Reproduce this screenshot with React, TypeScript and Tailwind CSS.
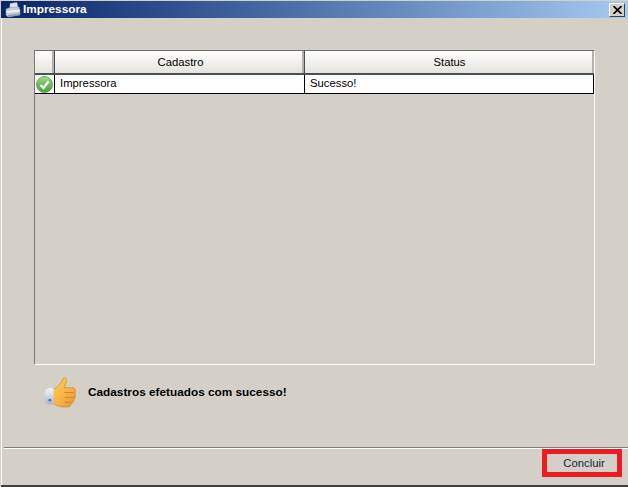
const tahoma = "font-['Liberation_Sans',Arial,sans-serif]";

function PrinterIcon() {
  return (
    <svg width="16" height="16" viewBox="0 0 16 16" className="shrink-0">
      <path d="M5 1.5 L12 0.5 L13 6 L5 7 Z" fill="#dfe6ee" stroke="#9fb0c4" strokeWidth="0.5" />
      <path d="M1 7 L5 5.5 L14 5 L15 9 L15 13 L3 15 L1 13 Z" fill="#c3ccd8" stroke="#8c9aac" strokeWidth="0.5" />
      <path d="M1.5 9 L15 7.5 L15 9.5 L2 11 Z" fill="#eef2f6" />
      <path d="M3 13 L15 11.5 L15 13 L3 15 Z" fill="#8f9db0" />
    </svg>
  );
}

function CheckIcon() {
  return (
    <svg width="17" height="17" viewBox="0 0 17 17">
      <defs>
        <linearGradient id="ok" x1="0" y1="0" x2="0" y2="1">
          <stop offset="0" stopColor="#a5d98f" />
          <stop offset="0.55" stopColor="#6cb857" />
          <stop offset="1" stopColor="#4aa63e" />
        </linearGradient>
      </defs>
      <circle cx="8.5" cy="8.5" r="8" fill="url(#ok)" stroke="#4a9a40" strokeWidth="0.8" />
      <path d="M4.5 9 L7.5 12 L12.5 5.5" fill="none" stroke="#ffffff" strokeWidth="2.2" />
    </svg>
  );
}

function ThumbIcon() {
  return (
    <svg width="33" height="32" viewBox="0 0 34 33">
      <defs>
        <linearGradient id="hand" x1="0" y1="0" x2="1" y2="1">
          <stop offset="0" stopColor="#ffd060" />
          <stop offset="0.6" stopColor="#f8b044" />
          <stop offset="1" stopColor="#e8942a" />
        </linearGradient>
        <linearGradient id="cuff" x1="0" y1="0" x2="0" y2="1">
          <stop offset="0" stopColor="#f5f7fa" />
          <stop offset="1" stopColor="#a9b7c8" />
        </linearGradient>
      </defs>
      <path d="M8 13 C13 12 17 8 20 1 C22 0 24 2 23 5 L21 11 L30 11 C33 12 33 15 32 17 C33 20 32 22 31 23 C31 26 29 27 28 28 C27 31 24 31 22 31 C17 31 13 30 9 27 Z" fill="url(#hand)" stroke="#c67d22" strokeWidth="0.6" />
      <path d="M21 16 L31 16 M21 21 L31 21 M21 26 L28 26" stroke="#c67d22" strokeWidth="0.8" fill="none" />
      <path d="M2 13 C5 11 8 11 10 12 L10 28 C7 29 4 28 2 27 C0 23 0 17 2 13 Z" fill="url(#cuff)" />
      <circle cx="6" cy="24" r="1.5" fill="#4f7aa8" />
    </svg>
  );
}

export default function App() {
  return (
    <div className={`${tahoma} w-[628px] h-[487px] bg-[#d4d0c8] flex flex-col overflow-hidden border-l border-l-[#d4d0c8] text-[11.3px] text-black`}>
      {/* title bar */}
      <div className="mt-px h-[17px] flex items-center justify-between pl-[4px] pr-[3px] bg-gradient-to-r from-[#0a246a] to-[#a6caf0]">
        <div className="flex items-center gap-[2px]">
          <PrinterIcon />
          <span className="text-[11.8px] font-bold text-white">Impressora</span>
        </div>
        <div className="w-[16px] h-[14px] flex items-center justify-center bg-[#d4d0c8] border border-t-white border-l-white border-r-[#404040] border-b-[#404040]">
          <svg width="9" height="8" viewBox="0 0 9 8">
            <path d="M0.5 0 L8.5 8 M8.5 0 L0.5 8" stroke="#000" strokeWidth="1.6" />
          </svg>
        </div>
      </div>

      <div className="flex-1 flex flex-col border-l border-l-white">
        {/* grid */}
        <div className="ml-[32px] mt-[32px] w-[561px] h-[315px] border-t border-l border-t-[#6d6d6d] border-l-[#7a7a76] border-r border-b border-r-white border-b-white flex flex-col">
          <div className="flex h-[24px] border-b-2 border-b-[#4a5058]">
            <div className="w-[19px] bg-gradient-to-b from-white to-[#e6e3dd] border-r-2 border-r-[#b5b2aa]" />
            <div className="w-[250px] pl-[4px] flex items-center justify-center bg-gradient-to-b from-white to-[#e6e3dd] border-l border-l-[#4a5058] border-r-2 border-r-[#b5b2aa]">
              Cadastro
            </div>
            <div className="flex-1 pl-[2px] flex items-center justify-center bg-gradient-to-b from-white to-[#e6e3dd] border-l border-l-[#4a5058] border-r-2 border-r-[#b5b2aa]">
              Status
            </div>
          </div>
          <div className="flex h-[19px] bg-white border-b border-b-black border-r border-r-black">
            <div className="w-[20px] flex items-center justify-center border-r border-r-black bg-white">
              <CheckIcon />
            </div>
            <div className="w-[250px] pl-[5px] pb-[2px] flex items-center border-r border-r-black">Impressora</div>
            <div className="flex-1 pl-[5px] pb-[2px] flex items-center">Sucesso!</div>
          </div>
        </div>

        {/* result message */}
        <div className="ml-[42px] mt-[10px] flex items-center gap-[11px] h-[36px]">
          <ThumbIcon />
          <span className="font-bold text-[11.8px]">Cadastros efetuados com sucesso!</span>
        </div>

        {/* footer */}
        <div className="mt-[36px] ml-[2px] border-t border-t-[#7c7c78] h-[2px] border-b border-b-white" />
        <div className="flex justify-end pr-[6px]">
          <div className="w-[80px] h-[28px] pl-[4px] flex items-center justify-center border-[5px] border-[#ed1c24] text-[#10233f]">
            Concluir
          </div>
        </div>
        <div className="flex-1" />
      </div>
      <div className="h-[2px] bg-[#404040] -ml-px" />
    </div>
  );
}
